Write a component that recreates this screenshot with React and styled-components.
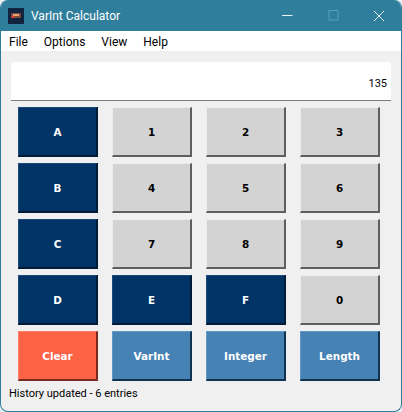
import React from 'react'
import styled, { createGlobalStyle } from 'styled-components'

const GlobalStyle = createGlobalStyle`
  html, body { margin: 0; padding: 0; background: #e8eef0; }
  * { box-sizing: border-box; }
`

const palette = {
  navy: { bg: '#003366', fg: '#ffffff', light: '#1a4a78', dark: '#001b38' },
  grey: { bg: '#d3d3d3', fg: '#000000', light: '#ececec', dark: '#5e5e5e' },
  red: { bg: '#ff6347', fg: '#ffffff', light: '#ff7d66', dark: '#7a2a1c' },
  blue: { bg: '#4682b4', fg: '#ffffff', light: '#5f97c5', dark: '#0f3350' },
}

const keys = [
  ['A', 'navy'], ['1', 'grey'], ['2', 'grey'], ['3', 'grey'],
  ['B', 'navy'], ['4', 'grey'], ['5', 'grey'], ['6', 'grey'],
  ['C', 'navy'], ['7', 'grey'], ['8', 'grey'], ['9', 'grey'],
  ['D', 'navy'], ['E', 'navy'], ['F', 'navy'], ['0', 'grey'],
  ['Clear', 'red'], ['VarInt', 'blue'], ['Integer', 'blue'], ['Length', 'blue'],
]

function AppIcon() {
  return (
    <svg width="16" height="16" viewBox="0 0 16 16">
      <rect width="16" height="16" fill="#10233f" />
      <rect x="3" y="5" width="10" height="5" rx="1" fill="#7a4a3a" />
      <rect x="5" y="6" width="6" height="2" fill="#e8a070" />
      <rect x="3" y="8" width="4" height="2" fill="#c9402c" />
    </svg>
  )
}

function App() {
  return (
    <>
      <GlobalStyle />
      <Window>
        <TitleBar>
          <AppIcon />
          <Title>VarInt Calculator</Title>
          <Controls>
            <Control>
              <svg width="11" height="11" viewBox="0 0 11 11"><path d="M0 5.5h10.5" stroke="#e6f2f6" strokeWidth="1" fill="none" /></svg>
            </Control>
            <Control>
              <svg width="11" height="11" viewBox="0 0 11 11"><rect x="1" y="0.5" width="9" height="9.5" stroke="#56a0bc" strokeWidth="1" fill="none" /></svg>
            </Control>
            <Control>
              <svg width="12" height="12" viewBox="0 0 12 12"><path d="M1 1l10 10M11 1L1 11" stroke="#e6f2f6" strokeWidth="1" fill="none" /></svg>
            </Control>
          </Controls>
        </TitleBar>
        <MenuBar>
          <MenuItem>File</MenuItem>
          <MenuItem>Options</MenuItem>
          <MenuItem>View</MenuItem>
          <MenuItem>Help</MenuItem>
        </MenuBar>
        <Body>
          <Display>135</Display>
          <Keypad>
            {keys.map(([label, tone]) => (
              <Key key={label} $tone={tone}>{label}</Key>
            ))}
          </Keypad>
          <Status>History updated - 6 entries</Status>
        </Body>
      </Window>
    </>
  )
}

export default App

const Window = styled.div`
  width: 402px;
  height: 412px;
  display: flex;
  flex-direction: column;
  overflow: hidden;
  background: #f0f0f0;
  border: 1px solid #2f7e9c;
  border-top: none;
  border-radius: 8px;
`

const TitleBar = styled.div`
  height: 31px;
  flex: none;
  display: flex;
  align-items: center;
  padding-left: 8px;
  margin: 0 -1px;
  background: #2f7e9c;
`

const Title = styled.div`
  margin-left: 7px;
  font: 12px Roboto, "Noto Sans", sans-serif;
  color: #ffffff;
`

const Controls = styled.div`
  margin-left: auto;
  display: flex;
`

const Control = styled.div`
  width: 46px;
  height: 30px;
  display: flex;
  align-items: center;
  justify-content: center;
`

const MenuBar = styled.div`
  height: 20px;
  flex: none;
  display: flex;
  align-items: center;
  gap: 16px;
  padding: 2px 0 0 8px;
  background: #ffffff;
`

const MenuItem = styled.span`
  font: 12px Roboto, "Noto Sans", sans-serif;
  color: #000000;
`

const Body = styled.div`
  flex: 1;
  display: flex;
  flex-direction: column;
  padding: 11px 10px 0;
`

const Display = styled.div`
  height: 39px;
  padding: 10px 4px 0 0;
  text-align: right;
  font: 11px Roboto, "Noto Sans", sans-serif;
  line-height: 24px;
  color: #000000;
  background: #ffffff;
  border-bottom: 1px solid #7a7a7a;
  border-radius: 3px 3px 0 0;
`

const Keypad = styled.div`
  display: grid;
  grid-template-columns: repeat(4, 80px);
  grid-auto-rows: 50px;
  gap: 6px 14px;
  margin: 6px 0 0 7px;
`

const Key = styled.div`
  display: flex;
  align-items: center;
  justify-content: center;
  font: bold 10.4px "DejaVu Sans", sans-serif;
  color: ${(p) => palette[p.$tone].fg};
  background: ${(p) => palette[p.$tone].bg};
  border: 1px solid;
  border-width: 1px 2px 2px 1px;
  border-color: ${(p) => palette[p.$tone].light} ${(p) => palette[p.$tone].dark} ${(p) => palette[p.$tone].dark} ${(p) => palette[p.$tone].light};
`

const Status = styled.div`
  margin: 5px 0 0 -2px;
  font: 11px Roboto, "Noto Sans", sans-serif;
  line-height: 16px;
  color: #000000;
`
